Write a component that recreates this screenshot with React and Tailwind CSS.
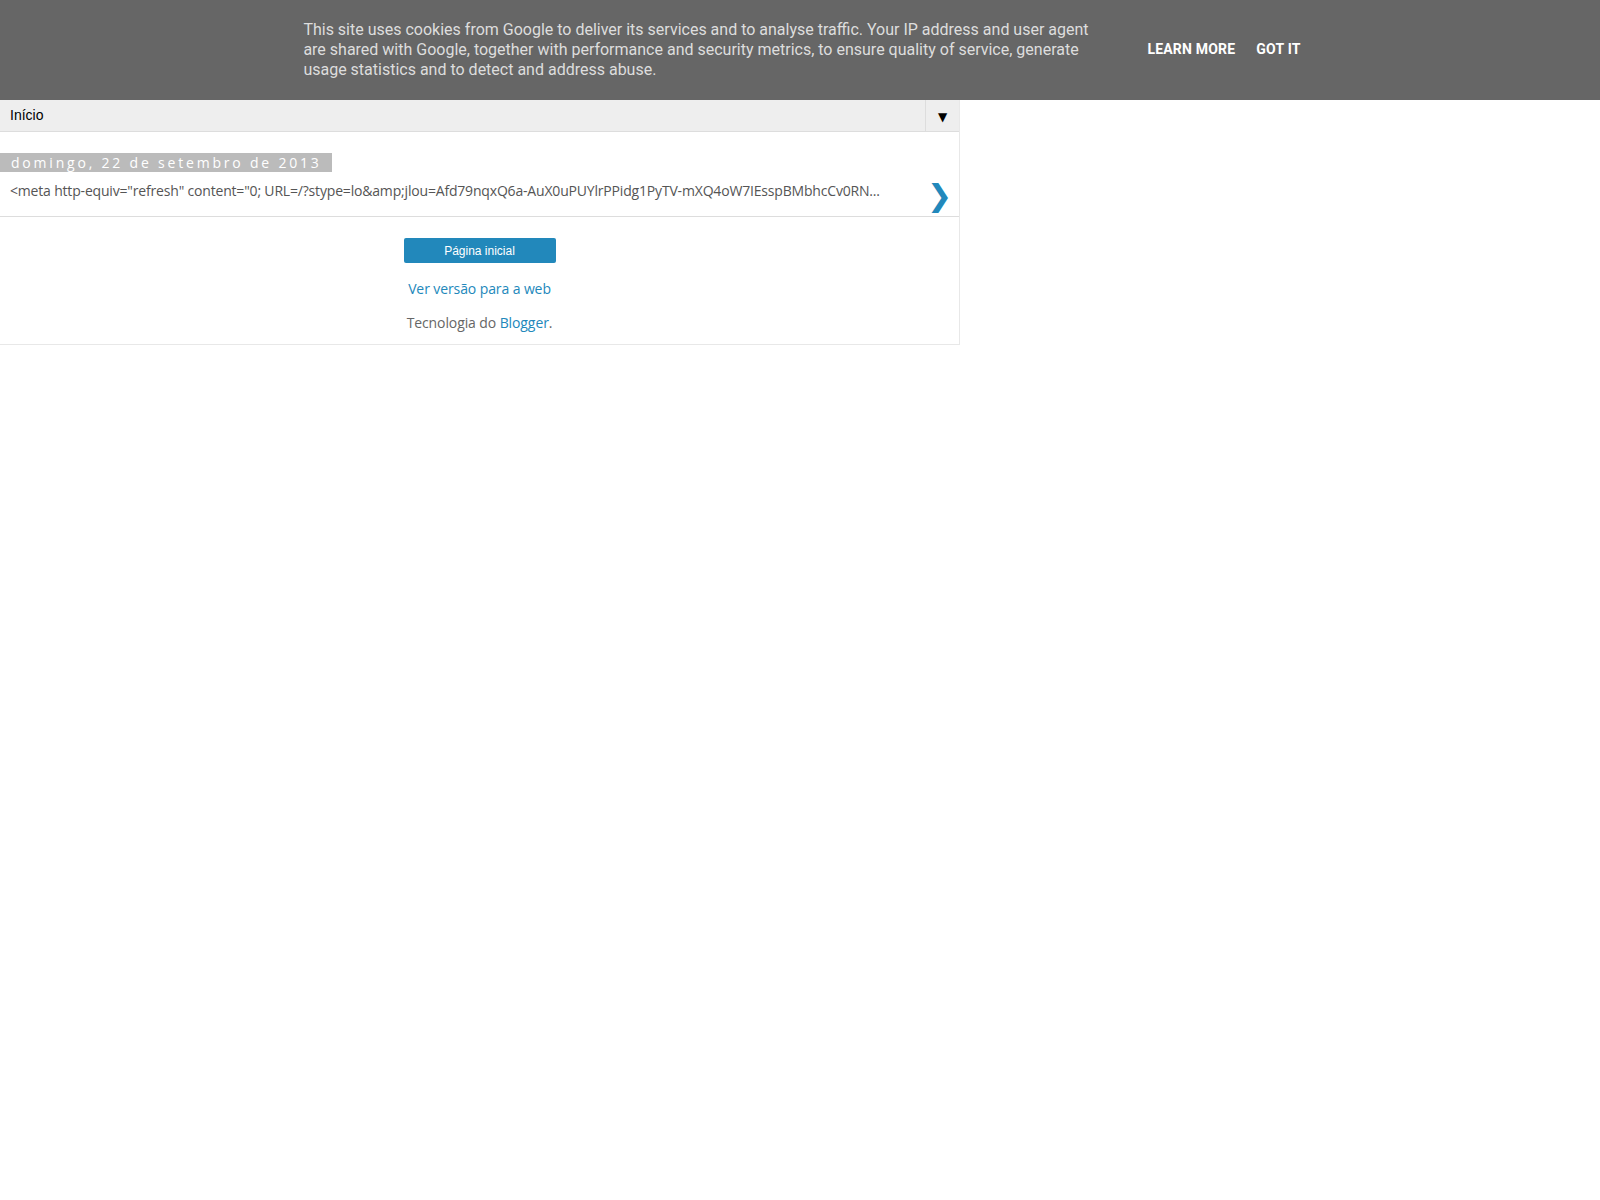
export default function App() {
  return (
    <div className="min-h-[1200px] bg-white">
      <div className="h-[100px] pl-[4px] bg-[#666666] flex items-center justify-center font-['Roboto','Liberation_Sans',sans-serif]">
        <div className="w-[800px] text-[16px] leading-[20px] text-[#dddddd]">
          This site uses cookies from Google to deliver its services and to analyse traffic. Your IP address and user agent are shared with Google, together with performance and security metrics, to ensure quality of service, generate usage statistics and to detect and address abuse.
        </div>
        <div className="flex items-center ml-[44px] mb-[2px] text-[14px] tracking-[0.2px] font-bold uppercase text-white">
          <span>Learn more</span>
          <span className="ml-[21px]">Got it</span>
        </div>
      </div>
      <div className="w-[960px] border-r border-b border-[#e8e8e8]">
        <div className="h-[32px] bg-[#eeeeee] border-b border-[#dddddd] flex items-stretch">
          <div className="flex-1 flex items-center pl-[10px] text-[14px] text-black font-['Liberation_Sans',Arial,sans-serif]">
            Início
          </div>
          <div className="w-[34px] border-l border-[#dddddd] flex items-center justify-center text-[12px] text-black pt-[2px] font-['DejaVu_Sans',sans-serif]">
            ▼
          </div>
        </div>
        <div className="flex border-b border-[#dddddd] h-[85px] font-['Open_Sans','DejaVu_Sans',sans-serif]">
          <div className="flex-1 pt-[18px]">
            <div className="inline-block bg-[#bbbbbb] text-white text-[14px] leading-[19px] tracking-[2.8px] pl-[11px] pr-[10px]">
              domingo, 22 de setembro de 2013
            </div>
            <div className="pl-[10px] pt-[8px] text-[14px] leading-[18px] tracking-[-0.18px] text-[#555555]">
              &lt;meta http-equiv="refresh" content="0; URL=/?stype=lo&amp;amp;jlou=Afd79nqxQ6a-AuX0uPUYlrPPidg1PyTV-mXQ4oW7IEsspBMbhcCv0RN...
            </div>
          </div>
          <div className="w-[40px] flex justify-center pt-[49px] pl-[1px] text-[#2288bb] text-[30px] leading-[30px] font-['DejaVu_Sans',sans-serif]">
            ❯
          </div>
        </div>
        <div className="flex flex-col items-center pt-[21px] pb-[12px] font-['Open_Sans','DejaVu_Sans',sans-serif]">
          <div className="w-[152px] h-[25px] bg-[#2288bb] rounded-[2px] flex items-center justify-center text-white text-[12px] font-['Liberation_Sans',Arial,sans-serif]">
            Página inicial
          </div>
          <div className="mt-[17px] text-[14px] leading-[18px] tracking-[-0.1px] text-[#2288bb]">Ver versão para a web</div>
          <div className="mt-[16px] text-[14px] leading-[18px] tracking-[-0.1px] text-[#666666]">
            Tecnologia do <span className="text-[#2288bb]">Blogger</span>.
          </div>
        </div>
      </div>
    </div>
  );
}
